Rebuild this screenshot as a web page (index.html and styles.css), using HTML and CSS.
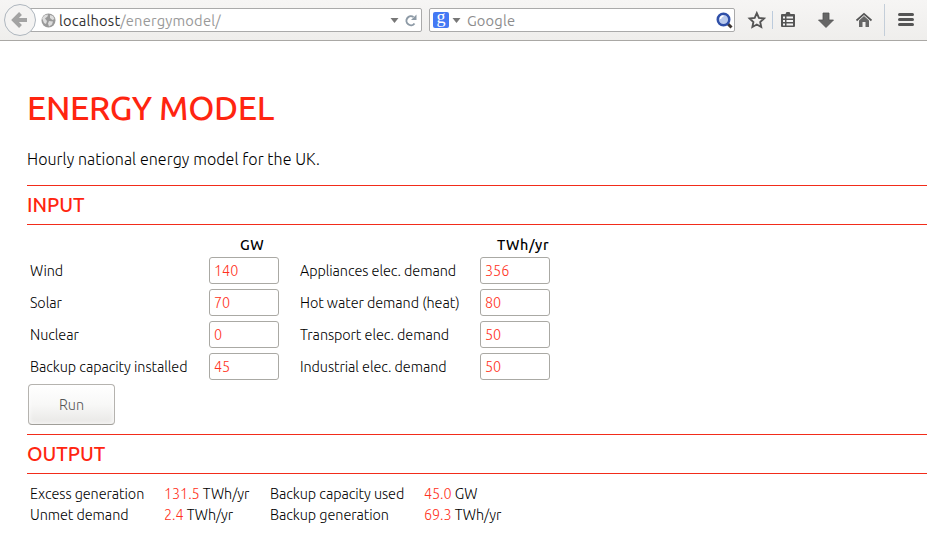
FILE: index.html
```
<!DOCTYPE html>
<html lang="en">
<head>
<meta charset="utf-8">
<title>Energy Model</title>
<link rel="stylesheet" href="styles.css">
</head>
<body>
<header class="toolbar">
  <div class="url">
    <svg class="back" width="34" height="36" viewBox="0 0 34 36"><circle cx="16" cy="16" r="15.5" fill="#f4f3f2" stroke="#aeb6be"/><path d="M9.500 16H23M16.500 9.500L10 16l6.500 6.500" fill="none" stroke="#a3a3a3" stroke-width="4"/></svg>
    <svg class="globe" width="15" height="15" viewBox="0 0 15 15"><circle cx="7.500" cy="7.500" r="7" fill="#999"/><path d="M1 5l3-3 3-.5-.5 2L4 5.500 6 8l-1 3-2-1zM9 2l3 1 1.500 3-2 1L9 5zM8 8l4 .5-1 3-3 2-1-3z" fill="#ddd"/></svg>
    <span class="address"><b>localhost</b>/energymodel/</span>
    <svg class="caret" width="9" height="7" viewBox="0 0 9 7"><path d="M.5 1h8l-4 5z" fill="#777"/></svg>
    <svg class="reload" width="12" height="13" viewBox="0 0 12 13"><path d="M9.500 9.500A4.500 4.500 0 1 1 8.500 3" fill="none" stroke="#8d9aa6" stroke-width="2"/><path d="M6 6h5.500V.5z" fill="#8d9aa6"/></svg>
  </div>
  <div class="search">
    <span class="engine">g</span>
    <svg class="caret" width="9" height="7" viewBox="0 0 9 7"><path d="M.5 1h8l-4 5z" fill="#777"/></svg>
    <span class="hint">Google</span>
    <svg class="lens" width="17" height="17" viewBox="0 0 17 17"><path d="M11 11l4.500 4.500" stroke="#3c3530" stroke-width="3"/><circle cx="7.500" cy="7.500" r="5.800" fill="#b9c9ec" stroke="#2f4fa8" stroke-width="2.400"/><path d="M4.500 7a3 3 0 0 1 3-3" stroke="#fff" stroke-width="1.500" fill="none"/></svg>
  </div>
  <svg class="tools" width="192" height="40" viewBox="0 0 192 40">
    <path d="M21.800 13.200l2.100 4.700 5.100.6-3.800 3.500 1 5-4.400-2.500-4.400 2.500 1-5-3.800-3.500 5.100-.6z" fill="none" stroke="#555" stroke-width="1.900"/>
    <path d="M37.500 11v18" stroke="#bccbdc"/>
    <path d="M47 14h3.500l1-2h3l1 2H59q1 0 1 1v11q0 1-1 1H47q-1 0-1-1V15q0-1 1-1z" fill="#555"/>
    <path d="M48 17.500h2M51.500 17.500H58M48 21h2M51.500 21H58M48 24.500h2M51.500 24.500H58" stroke="#f4f4f4" stroke-width="1.800"/>
    <path d="M88 13h6v7h4.500L91 27.500 83.500 20H88z" fill="#666" stroke="#505050" stroke-width=".8"/>
    <path d="M121.500 20.500l7.500-6.700 7.500 6.700" fill="none" stroke="#555" stroke-width="1.700"/><path d="M124 20.500l5-4.400 5 4.400V27h-3.500v-5h-3v5H124z" fill="#666"/>
    <path d="M149.500 4v32" stroke="#c4ced9"/>
    <path d="M164.500 14.500h13M164.500 19.500h13M164.500 24.500h13" stroke="#555" stroke-width="3" stroke-linecap="round"/>
  </svg>
</header>
<main>
  <h1>ENERGY MODEL</h1>
  <p class="intro">Hourly national energy model for the UK.</p>
  <h2 class="t-input">INPUT</h2>
  <form class="inputs">
    <span></span><b class="gw">GW</b><span></span><b class="twh">TWh/yr</b>
    <label>Wind</label><input value="140"><label>Appliances elec. demand</label><input value="356">
    <label>Solar</label><input value="70"><label>Hot water demand (heat)</label><input value="80">
    <label>Nuclear</label><input value="0"><label>Transport elec. demand</label><input value="50">
    <label>Backup capacity installed</label><input value="45"><label>Industrial elec. demand</label><input value="50">
  </form>
  <button type="button">Run</button>
  <h2 class="t-output">OUTPUT</h2>
  <div class="results">
    <span>Excess generation</span><span><em>131.5</em> TWh/yr</span><span>Backup capacity used</span><span><em>45.0</em> GW</span>
    <span>Unmet demand</span><span><em>2.4</em> TWh/yr</span><span>Backup generation</span><span><em>69.3</em> TWh/yr</span>
  </div>
</main>
</body>
</html>
```
FILE: styles.css
```
* { box-sizing: border-box; }
body { margin: 0; height: 550px; overflow: hidden; background: #fff; color: #000; font-family: Ubuntu, "Noto Sans", sans-serif; font-size: 14.4px; font-weight: 300; }
svg { flex: none; display: block; }
.toolbar { height: 41px; display: flex; align-items: flex-start; background: linear-gradient(#f6f5f4, #efeeec); border-bottom: 1px solid #aaa8a5; font-size: 14.67px; font-weight: 400; }
.url, .search { height: 24px; margin-top: 8px; background: #fff; border: 1px solid #aaa; border-radius: 2px; display: flex; align-items: center; }
.url { width: 402px; margin-left: 20px; }
.back { margin: 4px 0 0 -17px; }
.globe { margin: 0 3px 0 3px; }
.address { color: #999; letter-spacing: .19px; flex: 1; white-space: nowrap; padding-top: 1px; }
.address b { color: #333; font-weight: 400; }
.url .caret { margin-right: 6px; }
.reload { margin-right: 4px; }
.search { width: 306px; margin-left: 7px; padding-left: 3px; }
.engine { width: 16px; height: 16px; border-radius: 2px; background: #4479f4; color: #fff; font: 400 18px/11px "Liberation Serif", serif; text-align: center; }
.search .caret { margin: 0 6px 0 3px; }
.hint { color: #8c8c8c; flex: 1; padding-top: 1px; letter-spacing: .15px; }
.lens { margin-right: 1px; }
main { padding-left: 27px; }
h1, h2, p { margin: 0; white-space: nowrap; }
h1 { margin-top: 43px; height: 48px; color: #ff2510; font-size: 33.6px; line-height: 48px; font-weight: 500; letter-spacing: -.38px; }
.intro { height: 26px; line-height: 26px; margin: 14px 0 13px; font-size: 16px; letter-spacing: .07px; }
h2 { height: 40px; border: solid #f22c1a; border-width: 1px 0; color: #ff2510; font-size: 20px; line-height: 38px; font-weight: 500; letter-spacing: -.05px; }
.inputs { display: grid; grid-template-columns: 179px 91px 180px 72px; grid-template-rows: 32px repeat(4, 32px); padding: 0 0 0 3px; height: 158px; white-space: nowrap; align-items: center; letter-spacing: -.06px; }
.inputs b { color: #000; font-weight: 500; padding-top: 7px; letter-spacing: .55px; }
.gw { padding-left: 31px; }
.twh { padding-left: 17px; }
.inputs label { line-height: 27px; height: 27px; margin-top: -3px; }
.inputs input { width: 70px; height: 27px; margin: -5px 0 0; padding: 0 4px; border: 1px solid #aaa9a4; border-radius: 3px; color: #ff3020; background: #fff; font: 300 14.4px Ubuntu, "Noto Sans", sans-serif; }
button { display: block; width: 87px; height: 41px; margin: 1px 0 9px 1px; padding: 0; border: 1px solid #b5b3af; border-bottom-color: #a09e99; border-radius: 4px; color: #555; background: linear-gradient(#fff, #f8f8f7 50%, #e8e7e5); box-shadow: inset 0 0 5px #fff; font: 300 14.4px Ubuntu, "Noto Sans", sans-serif; }
.results { display: grid; grid-template-columns: 134px 106px 154px 120px; grid-auto-rows: 21px; line-height: 21px; padding: 10px 0 0 3px; white-space: nowrap; letter-spacing: -.06px; }
.results em { color: #ff3020; font-style: normal; }
```
